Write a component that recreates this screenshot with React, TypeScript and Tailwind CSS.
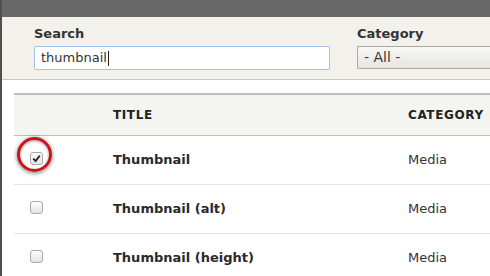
import React from "react";

const rows = [
  { title: "Thumbnail", category: "Media", checked: true },
  { title: "Thumbnail (alt)", category: "Media", checked: false },
  { title: "Thumbnail (height)", category: "Media", checked: false },
];

const Checkbox = ({ checked }: { checked: boolean }) => (
  <span className="flex h-[13px] w-[13px] items-center justify-center rounded-[3px] border border-[#a9a9a9] bg-gradient-to-b from-[#fcfcfc] to-[#e4e4e4]">
    {checked && (
      <svg width="9" height="9" viewBox="0 0 9 9">
        <path d="M1.2 4.6 L3.6 7 L7.8 1.6" fill="none" stroke="#2b2b2b" strokeWidth="1.9" />
      </svg>
    )}
  </span>
);

export default function App() {
  return (
    <div className="h-[276px] w-[490px] overflow-hidden border-l-2 border-[#4f4f4f] bg-white font-['DejaVu_Sans',sans-serif] text-[#333]">
      <div className="h-[17px] bg-[#686868]" />

      <div className="flex h-[63px] border-b border-[#c8c7c1] bg-[#f2f1ec] pl-[32px] pt-[9px]">
        <div className="flex w-[296px] flex-col">
          <label className="mb-[4px] text-[13px] font-bold leading-[16px] text-[#333]">Search</label>
          <div className="flex h-[24px] items-center rounded-[2px] border border-[#9ec3e4] bg-white pl-[6px] text-[13px] text-[#333]">
            thumbnail<span className="ml-[1px] h-[15px] w-px bg-[#222]" />
          </div>
        </div>
        <div className="ml-[27px] flex flex-1 flex-col">
          <label className="mb-[4px] text-[13px] font-bold leading-[16px] text-[#333]">Category</label>
          <div className="flex h-[23px] items-center rounded-l-[2px] border border-r-0 border-[#a9a9a5] bg-gradient-to-b from-[#f7f7f4] to-[#e6e5e0] pl-[6px] text-[14px] text-[#3b3b3b]">
            - All -
          </div>
        </div>
      </div>

      <div className="ml-[12px] mt-[13px] border-t-2 border-[#bfbfba]">
        <div className="grid h-[41px] grid-cols-[99px_295px_1fr] items-center border-b border-[#bebeb9] bg-[#f4f4f0] text-[12px] font-bold tracking-[0.6px] text-[#222]">
          <span />
          <span>TITLE</span>
          <span>CATEGORY</span>
        </div>
        {rows.map((row, i) => (
          <div
            key={i}
            className="grid h-[49px] grid-cols-[99px_295px_1fr] items-center border-b border-[#e6e4de] text-[13px]"
          >
            <div className="relative flex h-full items-center pb-[4px] pl-[16px]">
              <Checkbox checked={row.checked} />
              {row.checked && (
                <span className="absolute left-[3px] top-[1px] h-[35px] w-[35px] rounded-full border-[3px] border-[#c8141b] shadow-[0_1px_4px_rgba(0,0,0,0.55),inset_0_1px_3px_rgba(0,0,0,0.4)]" />
              )}
            </div>
            <span className="font-bold text-[#2a2a2a]">{row.title}</span>
            <span className="text-[#333]">{row.category}</span>
          </div>
        ))}
      </div>
    </div>
  );
}
